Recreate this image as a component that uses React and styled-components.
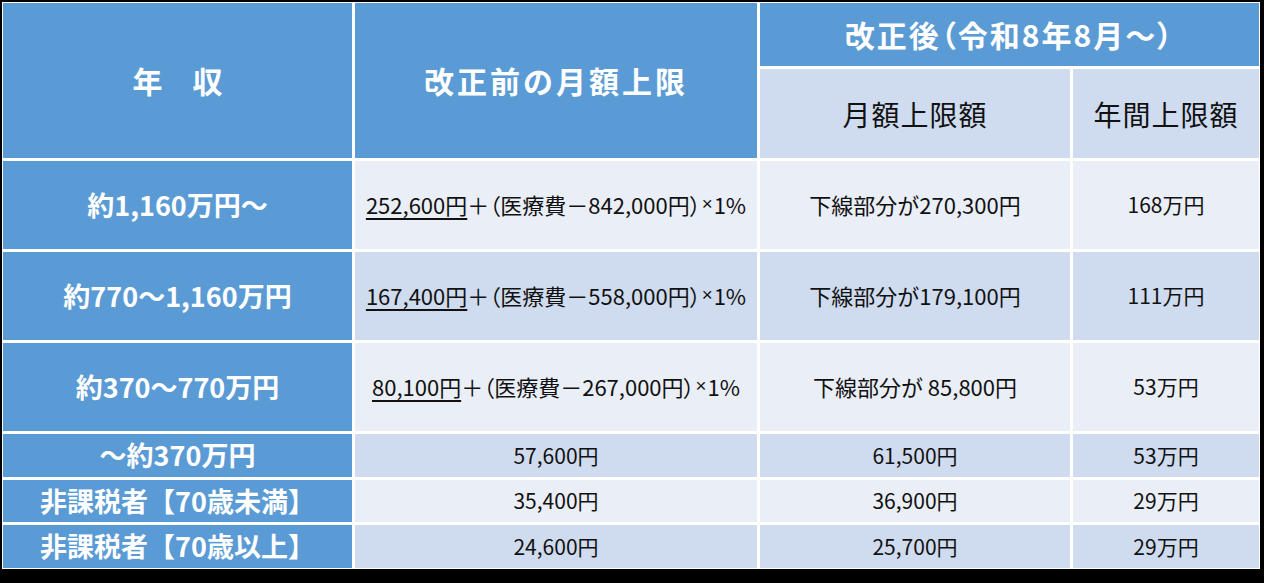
import React from "react";
import styled, { createGlobalStyle } from "styled-components";

const Global = createGlobalStyle`
  html, body { margin: 0; padding: 0; background: #000; }
  body { width: 1264px; height: 583px; overflow: hidden; }
  #root { width: 1264px; height: 583px; }
`;

const Frame = styled.div`
  padding: 2px 0 0 2px;
  background: #000;
  width: 1264px;
  height: 583px;
  box-sizing: border-box;
`;

const Table = styled.div`
  display: inline-grid;
  background: #fff;
  padding: 1px;
  gap: 3px;
  grid-template-columns: 349px 402px 310px 186px;
  grid-template-rows: 63px 89px 88px 88px 88px 43px 42px 43px;
  font-family: "Noto Sans CJK JP", "Noto Sans", sans-serif;
`;

const Base = styled.div`
  display: flex;
  align-items: center;
  justify-content: center;
  grid-column: ${(p) => p.$col || "auto"};
  grid-row: ${(p) => p.$row || "auto"};
  white-space: nowrap;
`;

const HeadCell = styled(Base)`
  background: #5b9bd5;
  color: #fff;
  font-weight: 700;
  font-size: ${(p) => p.$size || 29}px;
  letter-spacing: ${(p) => p.$ls || 0}px;
  font-feature-settings: ${(p) => (p.$palt ? '"palt"' : "normal")};
  padding-bottom: 2px;
`;

const SubHeadCell = styled(Base)`
  background: #cfdbee;
  color: #111;
  font-weight: 400;
  font-size: 28px;
  letter-spacing: 1px;
`;

const RowHead = styled(Base)`
  background: #5b9bd5;
  color: #fff;
  font-weight: 700;
  font-size: 27px;
  padding-bottom: 2px;
`;

const Cell = styled(Base)`
  background: ${(p) => (p.$dark ? "#cfdbee" : "#e9eef7")};
  color: #111;
  font-size: ${(p) => p.$size || 21}px;
  font-weight: 400;
  font-feature-settings: ${(p) => (p.$palt ? '"palt"' : "normal")};
  padding-bottom: 2px;
`;

const Under = styled.span`
  text-decoration: underline;
  text-decoration-thickness: 2px;
  text-underline-offset: 4px;
`;

const Times = styled.span`
  font-family: "Liberation Sans", sans-serif;
  font-size: 0.85em;
  margin: 0 1px;
`;

const bigRows = [
  {
    head: "約1,160万円～",
    base: "252,600円",
    fee: "842,000円",
    month: "下線部分が270,300円",
    year: "168万円",
  },
  {
    head: "約770～1,160万円",
    base: "167,400円",
    fee: "558,000円",
    month: "下線部分が179,100円",
    year: "111万円",
  },
  {
    head: "約370～770万円",
    base: "80,100円",
    fee: "267,000円",
    month: "下線部分が 85,800円",
    year: "53万円",
  },
];

const smallRows = [
  { head: "～約370万円", before: "57,600円", month: "61,500円", year: "53万円" },
  { head: "非課税者【70歳未満】", before: "35,400円", month: "36,900円", year: "29万円" },
  { head: "非課税者【70歳以上】", before: "24,600円", month: "25,700円", year: "29万円" },
];

export default function App() {
  return (
    <>
      <Global />
      <Frame>
        <Table>
          <HeadCell $col="1" $row="1 / 3" $size={30}>年　収</HeadCell>
          <HeadCell $col="2" $row="1 / 3" $size={30} $ls={3}>改正前の月額上限</HeadCell>
          <HeadCell $col="3 / 5" $row="1" $size={30} $ls={2} $palt>改正後（令和8年8月～）</HeadCell>
          <SubHeadCell $col="3" $row="2">月額上限額</SubHeadCell>
          <SubHeadCell $col="4" $row="2">年間上限額</SubHeadCell>
          {bigRows.map((r, i) => {
            const dark = i % 2 === 1;
            return (
              <React.Fragment key={r.head}>
                <RowHead>{r.head}</RowHead>
                <Cell $dark={dark} $size={22} $palt>
                  <Under>{r.base}</Under>
                  ＋（医療費－{r.fee}）<Times>×</Times>1%
                </Cell>
                <Cell $dark={dark} $size={22}>{r.month}</Cell>
                <Cell $dark={dark}>{r.year}</Cell>
              </React.Fragment>
            );
          })}
          {smallRows.map((r, i) => {
            const dark = i % 2 === 0;
            return (
              <React.Fragment key={r.head}>
                <RowHead>{r.head}</RowHead>
                <Cell $dark={dark}>{r.before}</Cell>
                <Cell $dark={dark}>{r.month}</Cell>
                <Cell $dark={dark}>{r.year}</Cell>
              </React.Fragment>
            );
          })}
        </Table>
      </Frame>
    </>
  );
}
